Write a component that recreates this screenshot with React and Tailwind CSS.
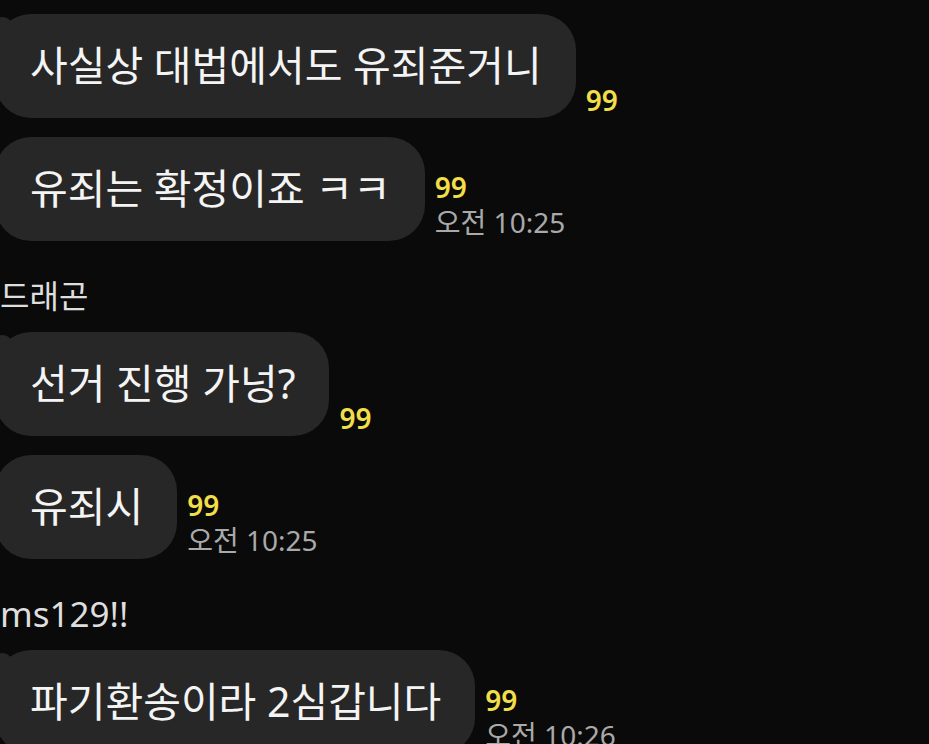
const FONT = { fontFamily: '"Noto Sans", "Noto Sans CJK KR", sans-serif' }

const rows = [
  { type: 'msg', text: '사실상 대법에서도 유죄준거니', tail: true, time: null, mt: 'mt-[14px]' },
  { type: 'msg', text: '유죄는 확정이죠 ㅋㅋ', time: '오전 10:25', mt: 'mt-[19px]' },
  { type: 'name', text: '드래곤', size: 'text-[32px]' },
  { type: 'msg', text: '선거 진행 가넝?', tail: true, time: null, mt: 'mt-[16px]' },
  { type: 'msg', text: '유죄시', time: '오전 10:25', mt: 'mt-[19px]' },
  { type: 'name', text: 'ms129!!', size: 'text-[35px]' },
  { type: 'msg', text: '파기환송이라 2심갑니다', tail: true, time: '오전 10:26', mt: 'mt-[16px]' },
]

function Bubble({ text, tail, time, mt }) {
  return (
    <div className={`flex items-end gap-[10px] ${mt}`}>
      <div className="relative -ml-[5px]">
        {tail && <div className="absolute -left-[4px] top-[3px] w-[22px] h-[22px] rounded-full bg-[#272727]" />}
        <div className="relative h-[104px] flex items-center rounded-[36px] bg-[#272727] pl-[35px] pr-[34px] text-[41px] text-[#f4f4f4] whitespace-nowrap">
          {text}
        </div>
      </div>
      <div className="flex flex-col pb-[1px]">
        <span className="text-[28px] leading-[34px] font-semibold text-[#f1de48]">99</span>
        {time && <span className="text-[28px] leading-[36px] text-[#a9a9a9] whitespace-nowrap">{time}</span>}
      </div>
    </div>
  )
}

export default function App() {
  return (
    <div className="w-[929px] h-[744px] overflow-hidden bg-[#0a0a0a]" style={FONT}>
      {rows.map((r, i) =>
        r.type === 'name' ? (
          <div key={i} className={`mt-[35px] ${r.size} leading-[40px] text-[#dedede]`}>{r.text}</div>
        ) : (
          <Bubble key={i} {...r} />
        )
      )}
    </div>
  )
}
